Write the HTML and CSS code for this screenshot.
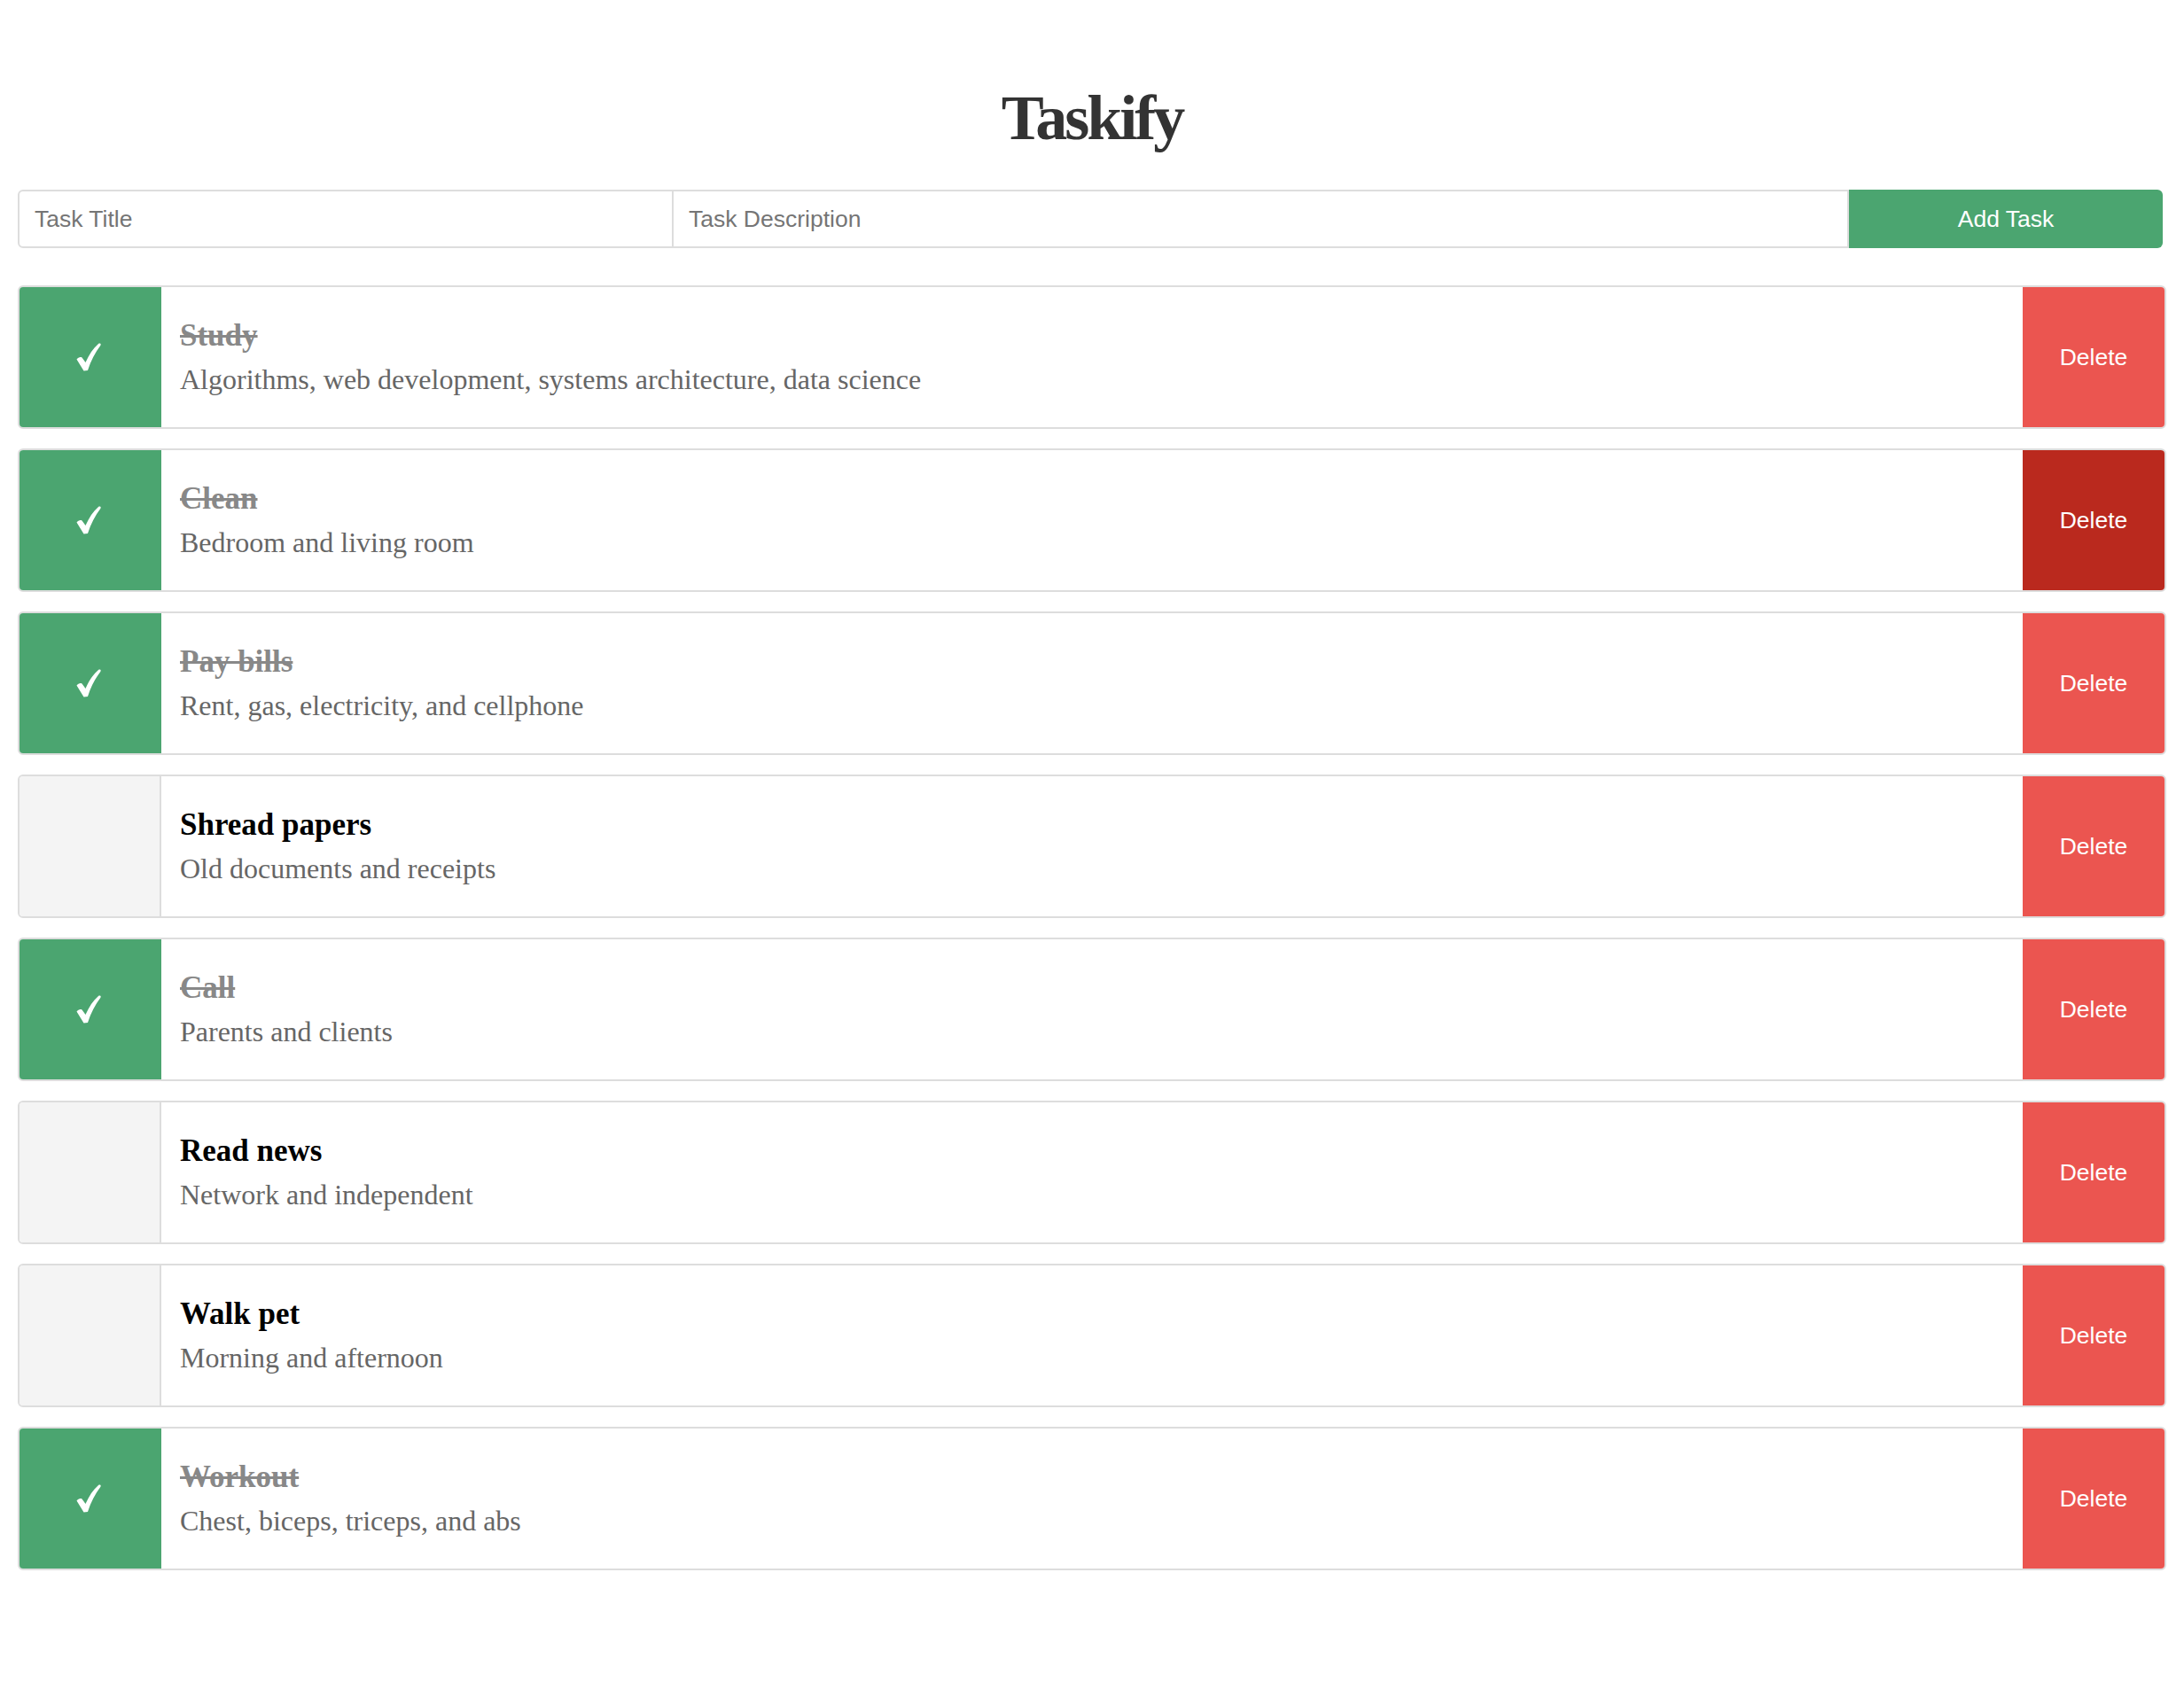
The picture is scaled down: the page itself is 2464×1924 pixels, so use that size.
FILE: index.html
```html
<!DOCTYPE html>
<html lang="en">
<head>
<meta charset="utf-8">
<title>Taskify</title>
<link rel="stylesheet" href="styles.css">
</head>
<body>
<div class="app">
  <h1 class="brand">Taskify</h1>
  <form class="task-form">
    <input class="field field-title" type="text" placeholder="Task Title">
    <input class="field field-desc" type="text" placeholder="Task Description">
    <button class="add-btn" type="button">Add Task</button>
  </form>
  <ul class="task-list">
    <li class="task done">
      <div class="check"><svg class="tick" viewBox="0 0 28 32"><path d="M0.5 18.5 C2 16.5 4.5 15.5 6.5 16.5 L10.5 22 C14.5 13 19 6 25 1 C26.8 -0.2 28.5 1.2 27.3 3 C21.5 10.5 16.5 20 13 31 L8.5 31.5 Z"/></svg></div>
      <div class="content"><div class="task-title">Study</div><div class="task-desc">Algorithms, web development, systems architecture, data science</div></div>
      <button class="del-btn" type="button">Delete</button>
    </li>
    <li class="task done">
      <div class="check"><svg class="tick" viewBox="0 0 28 32"><path d="M0.5 18.5 C2 16.5 4.5 15.5 6.5 16.5 L10.5 22 C14.5 13 19 6 25 1 C26.8 -0.2 28.5 1.2 27.3 3 C21.5 10.5 16.5 20 13 31 L8.5 31.5 Z"/></svg></div>
      <div class="content"><div class="task-title">Clean</div><div class="task-desc">Bedroom and living room</div></div>
      <button class="del-btn hover" type="button">Delete</button>
    </li>
    <li class="task done">
      <div class="check"><svg class="tick" viewBox="0 0 28 32"><path d="M0.5 18.5 C2 16.5 4.5 15.5 6.5 16.5 L10.5 22 C14.5 13 19 6 25 1 C26.8 -0.2 28.5 1.2 27.3 3 C21.5 10.5 16.5 20 13 31 L8.5 31.5 Z"/></svg></div>
      <div class="content"><div class="task-title">Pay bills</div><div class="task-desc">Rent, gas, electricity, and cellphone</div></div>
      <button class="del-btn" type="button">Delete</button>
    </li>
    <li class="task">
      <div class="check"></div>
      <div class="content"><div class="task-title">Shread papers</div><div class="task-desc">Old documents and receipts</div></div>
      <button class="del-btn" type="button">Delete</button>
    </li>
    <li class="task done">
      <div class="check"><svg class="tick" viewBox="0 0 28 32"><path d="M0.5 18.5 C2 16.5 4.5 15.5 6.5 16.5 L10.5 22 C14.5 13 19 6 25 1 C26.8 -0.2 28.5 1.2 27.3 3 C21.5 10.5 16.5 20 13 31 L8.5 31.5 Z"/></svg></div>
      <div class="content"><div class="task-title">Call</div><div class="task-desc">Parents and clients</div></div>
      <button class="del-btn" type="button">Delete</button>
    </li>
    <li class="task">
      <div class="check"></div>
      <div class="content"><div class="task-title">Read news</div><div class="task-desc">Network and independent</div></div>
      <button class="del-btn" type="button">Delete</button>
    </li>
    <li class="task">
      <div class="check"></div>
      <div class="content"><div class="task-title">Walk pet</div><div class="task-desc">Morning and afternoon</div></div>
      <button class="del-btn" type="button">Delete</button>
    </li>
    <li class="task done">
      <div class="check"><svg class="tick" viewBox="0 0 28 32"><path d="M0.5 18.5 C2 16.5 4.5 15.5 6.5 16.5 L10.5 22 C14.5 13 19 6 25 1 C26.8 -0.2 28.5 1.2 27.3 3 C21.5 10.5 16.5 20 13 31 L8.5 31.5 Z"/></svg></div>
      <div class="content"><div class="task-title">Workout</div><div class="task-desc">Chest, biceps, triceps, and abs</div></div>
      <button class="del-btn" type="button">Delete</button>
    </li>
  </ul>
</div>
</body>
</html>
```

FILE: styles.css
```css
html, body {
  margin: 0;
  padding: 0;
  background: #fff;
}

.app {
  padding: 91px 20px 40px;
  font-family: "Liberation Serif", "Times New Roman", serif;
}

.brand {
  margin: 0;
  text-align: center;
  font-size: 72px;
  line-height: 84px;
  letter-spacing: -3px;
  font-weight: 700;
  color: #333;
}

.task-form {
  display: grid;
  grid-template-columns: 740px 1fr 354px;
  height: 66px;
  margin: 39px 4px 0 0;
}

.field {
  box-sizing: border-box;
  height: 66px;
  margin: 0;
  border: 2px solid #ddd;
  border-left: none;
  padding: 0 17px;
  font-family: "Liberation Sans", Arial, sans-serif;
  font-size: 26.5px;
  color: #333;
  background: #fff;
  outline: none;
}

.field::placeholder {
  color: #757575;
}

.field-title {
  border-left: 2px solid #ddd;
  border-radius: 6px 0 0 6px;
}

.add-btn {
  height: 66px;
  margin: 0;
  border: none;
  border-radius: 0 6px 6px 0;
  background: #4ba570;
  color: #fff;
  font-family: "Liberation Sans", Arial, sans-serif;
  font-size: 26.5px;
  cursor: pointer;
}

.task-list {
  list-style: none;
  margin: 42px 0 0;
  padding: 0;
  display: flex;
  flex-direction: column;
  gap: 22px;
}

.task {
  display: flex;
  height: 162px;
  box-sizing: border-box;
  border: 2px solid #ddd;
  border-radius: 6px;
  overflow: hidden;
  background: #fff;
}

.check {
  flex: 0 0 158px;
  display: flex;
  align-items: center;
  justify-content: center;
  background: #f4f4f4;
  border-right: 2px solid #ddd;
}

.task.done .check {
  background: #4ba570;
  border-right-color: #4ba570;
}

.tick {
  width: 28px;
  height: 32px;
  fill: #fff;
  margin-left: -2px;
}

.content {
  flex: 1;
  display: flex;
  flex-direction: column;
  justify-content: center;
  padding-left: 21px;
}

.task-title {
  font-size: 35px;
  line-height: 40px;
  font-weight: 700;
  color: #000;
}

.task.done .task-title {
  color: #888;
  text-decoration: line-through;
}

.task-desc {
  margin-top: 9px;
  font-size: 32px;
  line-height: 40px;
  color: #666;
}

.del-btn {
  flex: 0 0 160px;
  margin: 0;
  border: none;
  background: #eb5550;
  color: #fff;
  font-family: "Liberation Sans", Arial, sans-serif;
  font-size: 26.5px;
  cursor: pointer;
}

.del-btn.hover {
  background: #ba291e;
}
```
